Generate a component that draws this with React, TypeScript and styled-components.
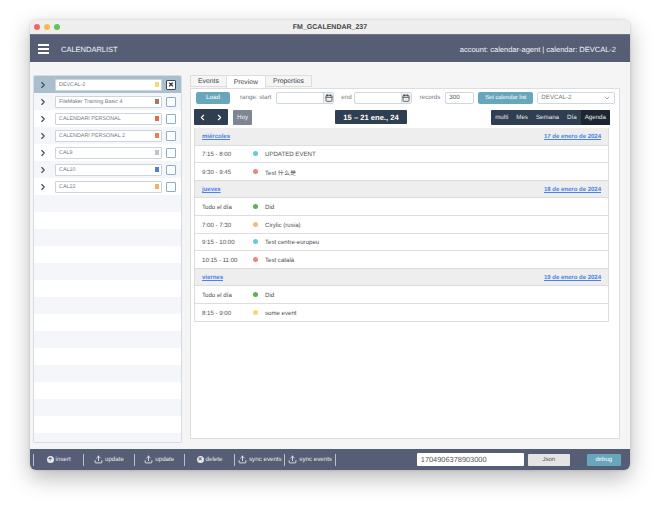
import React from "react";
import styled, { createGlobalStyle } from "styled-components";
import { ChevronRight, ChevronLeft, ChevronDown, Upload, Calendar } from "lucide-react";

const GlobalStyle = createGlobalStyle`
	html, body {
		margin: 0;
		padding: 0;
		background: #ffffff;
	}
	body {
		font-family: "Liberation Sans", Arial, sans-serif;
		text-rendering: geometricPrecision;
	}
`;

const calendars = [
	{ name: "DEVCAL-2", color: "#f7d774", active: true },
	{ name: "FileMaker Training Basic 4", color: "#a9746a" },
	{ name: "CALENDARI PERSONAL", color: "#e8684a" },
	{ name: "CALENDARI PERSONAL 2", color: "#ee7d4d" },
	{ name: "CAL9", color: "#c4c4c4" },
	{ name: "CAL10", color: "#4f7fdc" },
	{ name: "CAL22", color: "#f6b35f" },
];

const days = [
	{
		name: "miércoles",
		date: "17 de enero de 2024",
		events: [
			{ time: "7:15 - 8:00", color: "#62cdd8", title: "UPDATED EVENT" },
			{ time: "9:30 - 9:45", color: "#f0857a", title: "Test 什么是" },
		],
	},
	{
		name: "jueves",
		date: "18 de enero de 2024",
		events: [
			{ time: "Todo el día", color: "#5fb04f", title: "Did" },
			{ time: "7:00 - 7:30", color: "#f5b880", title: "Cirylic (rusia)" },
			{ time: "9:15 - 10:00", color: "#62cdd8", title: "Test centre-europeu" },
			{ time: "10:15 - 11:00", color: "#f0857a", title: "Test català" },
		],
	},
	{
		name: "viernes",
		date: "19 de enero de 2024",
		events: [
			{ time: "Todo el día", color: "#5fb04f", title: "Did" },
			{ time: "8:15 - 9:00", color: "#f7d774", title: "some event" },
		],
	},
];

const views = ["multi", "Mes", "Semana", "Día", "Agenda"];

const App: React.FC = () => {
	return (
		<Page>
			<GlobalStyle />
			<Window>
				<TitleBar>
					<Lights>
						<Light color="#ee6a5f" />
						<Light color="#f5bd4f" />
						<Light color="#61c454" />
					</Lights>
					FM_GCALENDAR_237
				</TitleBar>
				<Header>
					<Burger>
						<span />
						<span />
						<span />
					</Burger>
					<HeaderTitle>CALENDARLIST</HeaderTitle>
					<HeaderInfo>account: calendar-agent | calendar: DEVCAL-2</HeaderInfo>
				</Header>
				<Body>
					<SidePanel>
						{calendars.map((c) => (
							<CalRow key={c.name} active={c.active}>
								<RowChevron>
									<ChevronRight size={10} strokeWidth={2.6} color="#3f4a5a" />
								</RowChevron>
								<CalField>
									<CalName>{c.name}</CalName>
									<CalSwatch color={c.color} />
								</CalField>
								<Check active={c.active}>{c.active ? "✕" : ""}</Check>
							</CalRow>
						))}
						<EmptyStripes />
					</SidePanel>
					<Main>
						<Tabs>
							<Tab>Events</Tab>
							<Tab active>Preview</Tab>
							<Tab>Properties</Tab>
						</Tabs>
						<TabPanel>
							<FilterBar>
								<LoadButton>Load</LoadButton>
								<FilterLabel>range: start</FilterLabel>
								<DateField>
									<DateIcon>
										<Calendar size={8} strokeWidth={2.4} color="#444" />
									</DateIcon>
								</DateField>
								<EndLabel>end</EndLabel>
								<DateField>
									<DateIcon>
										<Calendar size={8} strokeWidth={2.4} color="#444" />
									</DateIcon>
								</DateField>
								<RecordsLabel>records</RecordsLabel>
								<RecordsField>300</RecordsField>
								<SetButton>Set calendar list</SetButton>
								<SelectField>
									DEVCAL-2
									<ChevronDown size={8} strokeWidth={2} color="#777" />
								</SelectField>
							</FilterBar>
							<CalToolbar>
								<NavGroup>
									<NavButton>
										<ChevronLeft size={9} strokeWidth={3} color="#fff" />
									</NavButton>
									<NavButton>
										<ChevronRight size={9} strokeWidth={3} color="#fff" />
									</NavButton>
								</NavGroup>
								<TodayButton>Hoy</TodayButton>
								<RangeTitle>15 – 21 ene., 24</RangeTitle>
								<ViewGroup>
									{views.map((v) => (
										<ViewButton key={v} active={v === "Agenda"}>
											{v}
										</ViewButton>
									))}
								</ViewGroup>
							</CalToolbar>
							<Agenda>
								{days.map((d) => (
									<React.Fragment key={d.name}>
										<DayRow>
											<DayLink>{d.name}</DayLink>
											<DayLink>{d.date}</DayLink>
										</DayRow>
										{d.events.map((e) => (
											<EventRow key={d.name + e.time}>
												<EventTime>{e.time}</EventTime>
												<EventDot color={e.color} />
												<EventTitle>{e.title}</EventTitle>
											</EventRow>
										))}
									</React.Fragment>
								))}
							</Agenda>
						</TabPanel>
					</Main>
				</Body>
				<Footer>
					<FootAction>
						<FootDot>+</FootDot>insert
					</FootAction>
					<FootAction>
						<Upload size={9} strokeWidth={2.4} />
						update
					</FootAction>
					<FootAction>
						<Upload size={9} strokeWidth={2.4} />
						update
					</FootAction>
					<FootAction>
						<FootDot>×</FootDot>delete
					</FootAction>
					<FootAction>
						<Upload size={9} strokeWidth={2.4} />
						sync events
					</FootAction>
					<FootAction>
						<Upload size={9} strokeWidth={2.4} />
						sync events
					</FootAction>
					<FootEnd />
					<IdField>1704906378903000</IdField>
					<JsonButton>Json</JsonButton>
					<DebugButton>debug</DebugButton>
				</Footer>
			</Window>
		</Page>
	);
};

export default App;

const Page = styled.div`
	width: 660px;
	height: 510px;
	padding: 20px 30px 40px;
	box-sizing: border-box;
	overflow: hidden;
	background: #ffffff;
`;

const Window = styled.div`
	width: 600px;
	height: 450px;
	display: flex;
	flex-direction: column;
	border-radius: 6px;
	overflow: hidden;
	background: #f5f5f5;
	box-shadow: 0 8px 22px rgba(0, 0, 0, 0.28), 0 0 3px rgba(0, 0, 0, 0.15);
`;

const TitleBar = styled.div`
	position: relative;
	flex: 0 0 15px;
	box-sizing: border-box;
	display: flex;
	align-items: center;
	justify-content: center;
	background: #eeeeee;
	border-bottom: 1px solid #6d7486;
	font-size: 7px;
	font-weight: bold;
	color: #444444;
`;

const Lights = styled.div`
	position: absolute;
	left: 4px;
	top: 4px;
	display: flex;
	gap: 4px;
`;

const Light = styled.span<{ color: string }>`
	width: 6px;
	height: 6px;
	border-radius: 50%;
	background: ${(p) => p.color};
`;

const Header = styled.div`
	flex: 0 0 27px;
	box-sizing: border-box;
	display: flex;
	align-items: center;
	padding: 1px 14px 0 8px;
	background: #565e75;
	color: #f4f5f8;
`;

const Burger = styled.div`
	display: flex;
	flex-direction: column;
	gap: 2px;
	width: 11px;

	span {
		height: 2px;
		background: #ffffff;
	}
`;

const HeaderTitle = styled.div`
	margin-left: 12px;
	font-size: 7.5px;
`;

const HeaderInfo = styled.div`
	margin-left: auto;
	font-size: 7.5px;
`;

const Body = styled.div`
	flex: 1;
	display: flex;
	padding: 13px 11px 6px 3px;
	min-height: 0;
`;

const SidePanel = styled.div`
	width: 149px;
	height: 368px;
	box-sizing: border-box;
	background: #ffffff;
	border: 1px solid #d4dde6;
	border-radius: 2px;
	display: flex;
	flex-direction: column;
	overflow: hidden;
`;

const CalRow = styled.div<{ active?: boolean }>`
	flex: 0 0 17px;
	display: flex;
	align-items: center;
	background: ${(p) => (p.active ? "#a9bfce" : "#ffffff")};

	&:nth-child(even) {
		background: ${(p) => (p.active ? "#a9bfce" : "#f4f6f9")};
	}
`;

const RowChevron = styled.div`
	width: 21px;
	box-sizing: border-box;
	padding-right: 4px;
	display: flex;
	justify-content: center;
`;

const CalField = styled.div`
	width: 107px;
	height: 12px;
	box-sizing: border-box;
	display: flex;
	align-items: center;
	background: #ffffff;
	border: 1px solid #ccd5de;
	border-radius: 1px;
	padding: 0 2px 0 3px;
`;

const CalName = styled.span`
	flex: 1;
	font-size: 5.4px;
	color: #767a81;
	white-space: nowrap;
`;

const CalSwatch = styled.span<{ color: string }>`
	width: 4px;
	height: 5px;
	background: ${(p) => p.color};
`;

const Check = styled.div<{ active?: boolean }>`
	margin-left: 4px;
	width: 8px;
	height: 8px;
	display: flex;
	align-items: center;
	justify-content: center;
	background: #ffffff;
	border: 1px solid ${(p) => (p.active ? "#34495e" : "#8fabcd")};
	border-radius: 1px;
	font-size: 7px;
	font-weight: bold;
	color: #111111;
`;

const EmptyStripes = styled.div`
	flex: 1;
	background: repeating-linear-gradient(
		to bottom,
		#f4f6f9 0,
		#f4f6f9 17px,
		#ffffff 17px,
		#ffffff 34px
	);
`;

const Main = styled.div`
	margin-left: 8px;
	flex: 1;
	display: flex;
	flex-direction: column;
	min-width: 0;
`;

const Tabs = styled.div`
	flex: 0 0 12px;
	display: flex;
	position: relative;
	z-index: 1;
`;

const Tab = styled.div<{ active?: boolean }>`
	height: ${(p) => (p.active ? "13px" : "12px")};
	box-sizing: border-box;
	padding: 0 7px;
	display: flex;
	align-items: center;
	font-size: 6.8px;
	color: #3a4048;
	background: ${(p) => (p.active ? "#ffffff" : "#f5f5f5")};
	border: 1px solid #dddddd;
	border-bottom: ${(p) => (p.active ? "none" : "1px solid #dddddd")};
	margin-right: -1px;
`;

const TabPanel = styled.div`
	width: 430px;
	height: 351px;
	box-sizing: border-box;
	background: #ffffff;
	border: 1px solid #dddddd;
	padding: 2px 3px;
`;

const FilterBar = styled.div`
	height: 13px;
	display: flex;
	align-items: center;
`;

const LoadButton = styled.div`
	margin-left: 2px;
	width: 34px;
	height: 12px;
	display: flex;
	align-items: center;
	justify-content: center;
	background: #68a7bb;
	border-radius: 2px;
	color: #ffffff;
	font-size: 6.2px;
`;

const FilterLabel = styled.span`
	margin-left: 10px;
	margin-right: 5px;
	font-size: 6.2px;
	color: #777c85;
	white-space: nowrap;
`;

const EndLabel = styled(FilterLabel)`
	margin-left: 7px;
	margin-right: 2px;
`;

const RecordsLabel = styled(FilterLabel)`
	margin-left: 8px;
	margin-right: 5px;
`;

const DateField = styled.div`
	width: 58px;
	height: 12px;
	box-sizing: border-box;
	display: flex;
	justify-content: flex-end;
	background: #ffffff;
	border: 1px solid #ccd8e2;
	border-radius: 2px;
`;

const DateIcon = styled.div`
	width: 9px;
	display: flex;
	align-items: center;
	justify-content: center;
	background: #f0f0f0;
	border-left: 1px solid #ccd8e2;
`;

const RecordsField = styled.div`
	width: 29px;
	height: 12px;
	box-sizing: border-box;
	padding-left: 3px;
	display: flex;
	align-items: center;
	border: 1px solid #ccd8e2;
	border-radius: 2px;
	font-size: 6.2px;
	color: #555555;
`;

const SetButton = styled.div`
	margin-left: 4px;
	width: 55px;
	height: 12px;
	display: flex;
	align-items: center;
	justify-content: center;
	background: #68a7bb;
	border-radius: 2px;
	color: #ffffff;
	font-size: 5.8px;
	white-space: nowrap;
`;

const SelectField = styled.div`
	margin-left: 4px;
	width: 78px;
	height: 12px;
	box-sizing: border-box;
	padding: 0 3px;
	display: flex;
	align-items: center;
	justify-content: space-between;
	border: 1px solid #ccd8e2;
	border-radius: 2px;
	font-size: 6.2px;
	color: #777777;
`;

const CalToolbar = styled.div`
	margin-top: 5px;
	height: 16px;
	display: flex;
	align-items: center;
	padding-right: 6px;
`;

const NavGroup = styled.div`
	display: flex;
	width: 34px;
	height: 16px;
	background: #2f3e50;
	border-radius: 1px;
`;

const NavButton = styled.div`
	flex: 1;
	display: flex;
	align-items: center;
	justify-content: center;
`;

const TodayButton = styled.div`
	margin-left: 5px;
	width: 19px;
	height: 15px;
	display: flex;
	align-items: center;
	justify-content: center;
	background: #7e8693;
	border-radius: 1px;
	color: #eef0f2;
	font-size: 6.2px;
`;

const RangeTitle = styled.div`
	margin-left: 83px;
	width: 72px;
	height: 14px;
	display: flex;
	align-items: center;
	justify-content: center;
	background: #2f3e50;
	border-radius: 1px;
	color: #ffffff;
	font-size: 7.6px;
	font-weight: bold;
`;

const ViewGroup = styled.div`
	margin-left: auto;
	width: 119px;
	height: 15px;
	display: flex;
	justify-content: flex-end;
	background: #2f3e50;
	border-radius: 1px;
	overflow: hidden;
`;

const ViewButton = styled.div<{ active?: boolean }>`
	padding: 0 4px;
	display: flex;
	align-items: center;
	font-size: 6.2px;
	color: #e6e8ea;
	background: ${(p) => (p.active ? "#1d2732" : "transparent")};
`;

const Agenda = styled.div`
	margin-top: 3px;
	width: 413px;
	border-left: 1px solid #dddddd;
	border-right: 1px solid #dddddd;
`;

const DayRow = styled.div`
	height: 17.6px;
	box-sizing: border-box;
	display: flex;
	align-items: center;
	justify-content: space-between;
	padding: 0 7px;
	background: #eeeeee;
	border-bottom: 1px solid #dddddd;
`;

const DayLink = styled.span`
	padding-top: 2px;
	font-size: 6px;
	font-weight: bold;
	color: #4a82ea;
	text-decoration: underline;
`;

const EventRow = styled.div`
	height: 17.6px;
	box-sizing: border-box;
	display: flex;
	align-items: center;
	padding-left: 7px;
	border-bottom: 1px solid #dddddd;
	color: #505050;
	font-size: 6.1px;
`;

const EventTime = styled.span`
	width: 51px;
	padding-top: 2px;
`;

const EventDot = styled.span<{ color: string }>`
	width: 5px;
	height: 5px;
	border-radius: 50%;
	background: ${(p) => p.color};
`;

const EventTitle = styled.span`
	margin-left: 7px;
	padding-top: 2px;
	font-family: "Liberation Sans", "Noto Sans CJK SC", sans-serif;
`;

const Footer = styled.div`
	flex: 0 0 21px;
	display: flex;
	align-items: center;
	padding-left: 3px;
	background: #565e75;
	color: #e6e8ee;
	font-size: 6.2px;
`;

const FootAction = styled.div`
	width: 50.3px;
	height: 12px;
	box-sizing: border-box;
	display: flex;
	align-items: center;
	justify-content: center;
	gap: 2px;
	border-left: 1px solid #b9bfcc;
	white-space: nowrap;
`;

const FootDot = styled.span`
	width: 7px;
	height: 7px;
	border-radius: 50%;
	background: #e6e8ee;
	color: #565e75;
	display: flex;
	align-items: center;
	justify-content: center;
	font-size: 7px;
	font-weight: bold;
	line-height: 1;
`;

const FootEnd = styled.div`
	width: 1px;
	height: 12px;
	background: #b9bfcc;
`;

const IdField = styled.div`
	margin-left: 81px;
	width: 107px;
	height: 13px;
	box-sizing: border-box;
	padding-left: 4px;
	display: flex;
	align-items: center;
	background: #ffffff;
	border-radius: 1px;
	color: #555555;
	font-size: 7.4px;
`;

const JsonButton = styled.div`
	margin-left: 4px;
	width: 42px;
	height: 12px;
	display: flex;
	align-items: center;
	justify-content: center;
	background: #e4e4e4;
	border-radius: 1px;
	color: #555555;
	font-size: 6px;
`;

const DebugButton = styled.div`
	margin-left: 17px;
	width: 34px;
	height: 12px;
	display: flex;
	align-items: center;
	justify-content: center;
	background: #68a7bb;
	border-radius: 1px;
	color: #ffffff;
	font-size: 6px;
`;
